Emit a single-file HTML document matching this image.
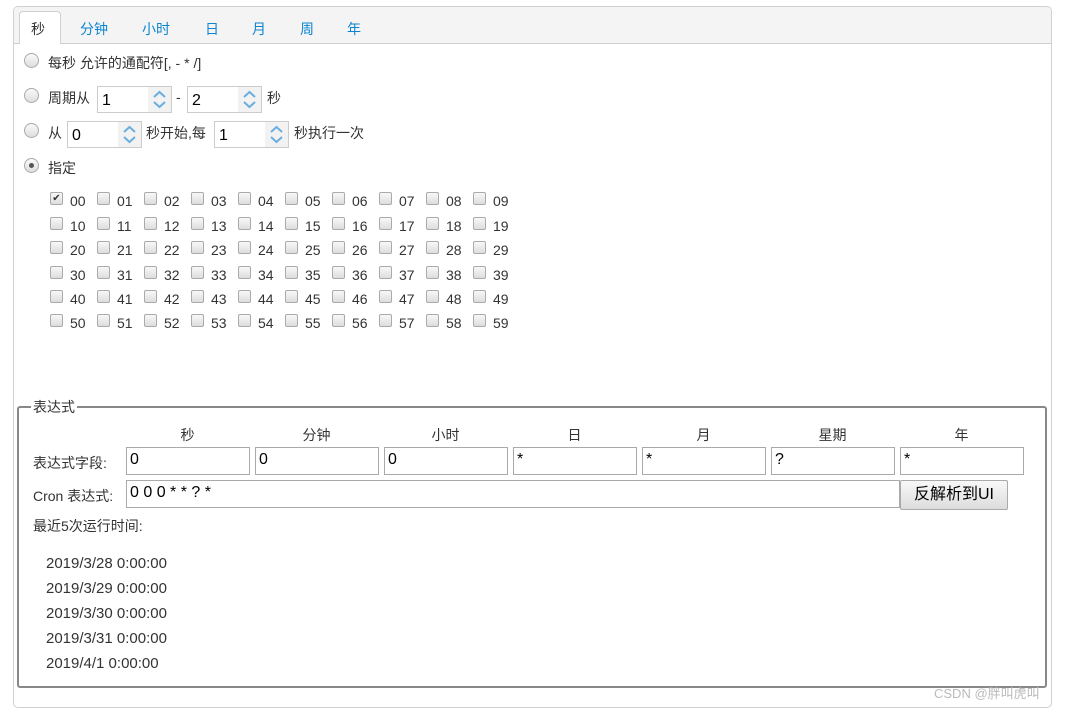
<!DOCTYPE html>
<html><head><meta charset="utf-8"><style>
*{box-sizing:border-box;margin:0;padding:0}
body{width:1065px;height:708px;background:#fff;font-family:"Liberation Sans","Noto Sans CJK SC",sans-serif;font-size:14px;color:#333;position:relative;overflow:hidden}
.a{position:absolute;white-space:nowrap}
.panel{position:absolute;left:13px;top:6px;width:1039px;height:702px;border:1px solid #d0d0d0;border-radius:5px}
.tabs{position:absolute;left:14px;top:7px;width:1037px;height:37px;background:#f4f4f4;border-bottom:1px solid #d0d0d0;border-radius:4px 4px 0 0}
.tab{position:absolute;top:19px;color:#0c85d0;font-size:14px}
.act{position:absolute;left:19px;top:11px;width:42px;height:33px;background:#fff;border:1px solid #d0d0d0;border-bottom:none;border-radius:4px 4px 0 0}
.radio{position:absolute;left:24px;width:15px;height:15px;border-radius:50%;border:1px solid #aaa;background:linear-gradient(#fafafa,#ddd)}
.spin{position:absolute;height:27px;border:1px solid #ccc;background:#fff;font-size:16px;padding:5px 0 0 4px;color:#000}
.spin svg{position:absolute;right:0;top:0;width:23px;height:25px;background:#f2f2f2}
.row{position:absolute;left:50px;display:flex}
.row span{width:47px;display:flex;align-items:center;font-size:14px;color:#333}
.row i{display:inline-block;width:13px;height:13px;border:1px solid #aaa;border-radius:2px;background:linear-gradient(#f8f8f8,#ddd);margin-right:7px;position:relative;top:-3px}
fieldset{position:absolute;left:17px;top:397px;width:1030px;height:291px;border:2px solid #888;border-radius:3px}
legend{margin-left:12px;padding:0 2px;font-size:14px}
.h{position:absolute;top:425px;width:123px;text-align:center;font-size:14px}
.in{position:absolute;top:447px;width:124px;height:28px;border:1px solid #aaa;font-size:16px;padding:3px 3px;color:#000}
</style></head><body>
<div class="panel"></div>
<div class="tabs"></div>
<div class="act"></div>
<div class="tab" style="left:31px;color:#333">秒</div>
<div class="tab" style="left:80px">分钟</div>
<div class="tab" style="left:142px">小时</div>
<div class="tab" style="left:205px">日</div>
<div class="tab" style="left:252px">月</div>
<div class="tab" style="left:300px">周</div>
<div class="tab" style="left:347px">年</div>

<div class="radio" style="top:53px"></div><div class="a" style="left:48px;top:53px">每秒 允许的通配符[, - * /]</div>
<div class="radio" style="top:88px"></div><div class="a" style="left:48px;top:88px">周期从</div>
<div class="spin" style="left:97px;top:86px;width:75px">1<svg viewBox="0 0 23 25"><path d="M6 10l5.5-5 5.5 5M6 15l5.5 5 5.5-5" stroke="#6aaee0" stroke-width="2" fill="none"/></svg></div>
<div class="a" style="left:176px;top:89px">-</div>
<div class="spin" style="left:187px;top:86px;width:75px">2<svg viewBox="0 0 23 25"><path d="M6 10l5.5-5 5.5 5M6 15l5.5 5 5.5-5" stroke="#6aaee0" stroke-width="2" fill="none"/></svg></div>
<div class="a" style="left:267px;top:88px">秒</div>
<div class="radio" style="top:123px"></div><div class="a" style="left:48px;top:123px">从</div>
<div class="spin" style="left:67px;top:121px;width:75px">0<svg viewBox="0 0 23 25"><path d="M6 10l5.5-5 5.5 5M6 15l5.5 5 5.5-5" stroke="#6aaee0" stroke-width="2" fill="none"/></svg></div>
<div class="a" style="left:146px;top:123px">秒开始,每</div>
<div class="spin" style="left:214px;top:121px;width:75px">1<svg viewBox="0 0 23 25"><path d="M6 10l5.5-5 5.5 5M6 15l5.5 5 5.5-5" stroke="#6aaee0" stroke-width="2" fill="none"/></svg></div>
<div class="a" style="left:294px;top:123px">秒执行一次</div>
<div class="radio" style="top:158px"><div style="width:5px;height:5px;border-radius:50%;background:#555;margin:4px"></div></div><div class="a" style="left:48px;top:158px">指定</div>

<div class="row" style="top:193px"><span><i style="text-align:center;font-size:10px;line-height:11px;font-style:normal">✔</i>00</span><span><i></i>01</span><span><i></i>02</span><span><i></i>03</span><span><i></i>04</span><span><i></i>05</span><span><i></i>06</span><span><i></i>07</span><span><i></i>08</span><span><i></i>09</span></div>
<div class="row" style="top:218px"><span><i></i>10</span><span><i></i>11</span><span><i></i>12</span><span><i></i>13</span><span><i></i>14</span><span><i></i>15</span><span><i></i>16</span><span><i></i>17</span><span><i></i>18</span><span><i></i>19</span></div>
<div class="row" style="top:242px"><span><i></i>20</span><span><i></i>21</span><span><i></i>22</span><span><i></i>23</span><span><i></i>24</span><span><i></i>25</span><span><i></i>26</span><span><i></i>27</span><span><i></i>28</span><span><i></i>29</span></div>
<div class="row" style="top:267px"><span><i></i>30</span><span><i></i>31</span><span><i></i>32</span><span><i></i>33</span><span><i></i>34</span><span><i></i>35</span><span><i></i>36</span><span><i></i>37</span><span><i></i>38</span><span><i></i>39</span></div>
<div class="row" style="top:291px"><span><i></i>40</span><span><i></i>41</span><span><i></i>42</span><span><i></i>43</span><span><i></i>44</span><span><i></i>45</span><span><i></i>46</span><span><i></i>47</span><span><i></i>48</span><span><i></i>49</span></div>
<div class="row" style="top:315px"><span><i></i>50</span><span><i></i>51</span><span><i></i>52</span><span><i></i>53</span><span><i></i>54</span><span><i></i>55</span><span><i></i>56</span><span><i></i>57</span><span><i></i>58</span><span><i></i>59</span></div>

<fieldset><legend>表达式</legend></fieldset>
<div class="h" style="left:126px">秒</div><div class="h" style="left:255px">分钟</div><div class="h" style="left:384px">小时</div><div class="h" style="left:513px">日</div><div class="h" style="left:642px">月</div><div class="h" style="left:771px">星期</div><div class="h" style="left:900px">年</div>
<div class="a" style="left:33px;top:453px">表达式字段:</div>
<div class="in" style="left:126px">0</div><div class="in" style="left:255px">0</div><div class="in" style="left:384px">0</div><div class="in" style="left:513px">*</div><div class="in" style="left:642px">*</div><div class="in" style="left:771px">?</div><div class="in" style="left:900px">*</div>
<div class="a" style="left:33px;top:486px">Cron 表达式:</div>
<div class="in" style="left:126px;top:480px;width:774px">0 0 0 * * ? *</div>
<div class="a" style="left:900px;top:480px;width:108px;height:30px;border:1px solid #aaa;border-radius:2px;background:linear-gradient(#f8f8f8,#ddd);font-size:16px;text-align:center;line-height:28px;color:#000">反解析到UI</div>
<div class="a" style="left:33px;top:516px">最近5次运行时间:</div>
<div class="a" style="left:46px;top:551px;font-size:15px;line-height:25px">2019/3/28 0:00:00<br>2019/3/29 0:00:00<br>2019/3/30 0:00:00<br>2019/3/31 0:00:00<br>2019/4/1 0:00:00</div>
<div class="a" style="left:934px;top:683px;color:#bbb;font-size:13px">CSDN @胖叫虎叫</div>
</body></html>
